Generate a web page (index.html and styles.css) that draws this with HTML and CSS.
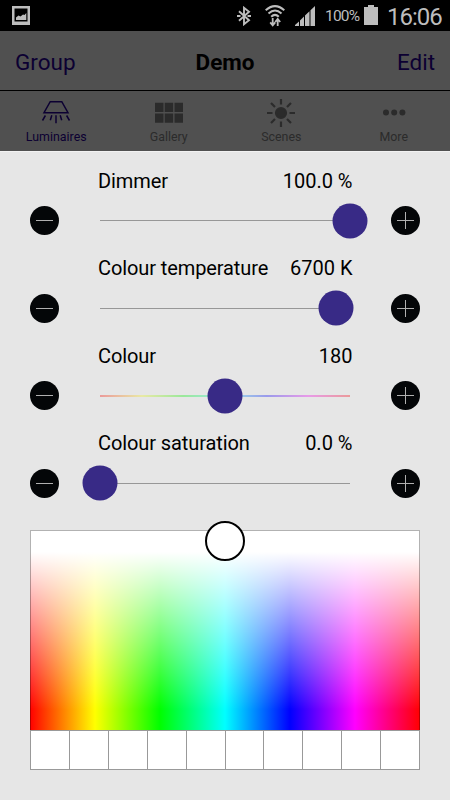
FILE: index.html
```
<!DOCTYPE html>
<html lang="en">
<head>
    <meta charset="UTF-8">
    <meta name="viewport" content="width=device-width, initial-scale=1.0">
    <title>Demo</title>
    <link rel="stylesheet" href="styles.css">
</head>
<body>
    <div class="status-bar">
        <svg class="picture-icon" width="18" height="19" viewBox="0 0 18 19">
            <path d="M0 0h18v19H0z" fill="#bdbdbd"/>
            <path d="M2.500 2.500h13v13h-13z" fill="#000"/>
            <path d="M4 14v-2.500l2.500-2 2 1 2.500-2 1.500.5 1.800-2V14z" fill="#bdbdbd"/>
        </svg>
        <div class="status-icons">
            <svg width="14" height="20" viewBox="0 0 14 20" fill="none" stroke="#bdbdbd" stroke-width="1.900">
                <path d="M2 5.300l10 8.900-5 4V1.800l5 4-10 8.900"/>
                <path d="M0 10h3.500M10.500 10H14"/>
            </svg>
            <svg class="wifi-icon" width="20" height="22" viewBox="0 0 20 22" fill="none" stroke="#bdbdbd" stroke-width="2">
                <path d="M.7 5.200Q10-3 19.300 5.200M3.500 8.500Q10 2.500 16.500 8.500M6.200 11.700Q10 8 13.800 11.700"/>
                <path d="M7.700 13v7M5.200 17.300l2.500 3 2.500-3M12.700 21v-7M10.200 17l2.500-3 2.500 3" stroke-width="1.800"/>
            </svg>
            <svg class="signal-icon" width="20" height="20" viewBox="0 0 20 20" fill="#bdbdbd">
                <path d="M0 20v-1l4-3.500V20zM5 20v-5.500l4-4V20zM10 20V9.500l4.500-4.200V20zM15.500 20V4.300L20 0v20z"/>
            </svg>
        </div>
        <span class="battery-level">100%</span>
        <svg class="battery-icon" width="14" height="20" viewBox="0 0 14 20" fill="#bdbdbd">
            <path d="M0 2h4V0h6v2h4v18H0z"/>
        </svg>
        <span class="clock">16:06</span>
    </div>

    <div class="nav-bar">
        <span class="nav-link">Group</span>
        <h1>Demo</h1>
        <span class="nav-link right">Edit</span>
    </div>

    <div class="tabs">
        <div class="tab active">
            <svg width="30" height="28" viewBox="0 0 30 28" fill="none" stroke="currentColor" stroke-width="1.500">
                <path d="M9.200 3.700h11.600l6.200 11H3z"/>
                <path d="M4.400 17.500l-2.900 5M10.800 17.300l-1.500 5M15 17.300v8M19.200 17.300l1.500 5M25.600 17.500l2.900 5"/>
            </svg>
            <span>Luminaires</span>
        </div>
        <div class="tab">
            <svg width="30" height="28" viewBox="0 0 30 28" fill="currentColor">
                <path d="M1 4.700h8.500V14H1zM10.700 4.700h8.500V14h-8.500zM20.500 4.700H29V14h-8.500zM1 15.500h8.500v9.200H1zM10.700 15.500h8.500v9.200h-8.500zM20.500 15.500H29v9.200h-8.500z"/>
            </svg>
            <span>Gallery</span>
        </div>
        <div class="tab">
            <svg width="30" height="28" viewBox="0 0 30 28" fill="currentColor" stroke="currentColor" stroke-width="2.200">
                <circle cx="15" cy="15" r="5"/>
                <path d="M15 1v5.500M15 23.500V29M1 15h5.500M23.500 15H29M5 5l4 4M21 21l4 4M5 25l4-4M21 9l4-4"/>
            </svg>
            <span>Scenes</span>
        </div>
        <div class="tab">
            <svg width="30" height="28" viewBox="0 0 30 28" fill="currentColor">
                <circle cx="7" cy="14.600" r="3"/>
                <circle cx="15.200" cy="14.600" r="3"/>
                <circle cx="23.400" cy="14.600" r="3"/>
            </svg>
            <span>More</span>
        </div>
    </div>

    <div class="panel">
        <div class="control">
            <div class="labels"><span class="name">Dimmer</span><span>100.0 %</span></div>
            <div class="slider-row">
                <button class="step minus" aria-label="Decrease"></button>
                <div class="slider"><div class="thumb" style="left: 100%"></div></div>
                <button class="step plus" aria-label="Increase"></button>
            </div>
        </div>
        <div class="control">
            <div class="labels"><span class="name">Colour temperature</span><span>6700 K</span></div>
            <div class="slider-row">
                <button class="step minus" aria-label="Decrease"></button>
                <div class="slider"><div class="thumb" style="left: 94.200%"></div></div>
                <button class="step plus" aria-label="Increase"></button>
            </div>
        </div>
        <div class="control">
            <div class="labels"><span class="name">Colour</span><span>180</span></div>
            <div class="slider-row">
                <button class="step minus" aria-label="Decrease"></button>
                <div class="slider hue"><div class="thumb" style="left: 50%"></div></div>
                <button class="step plus" aria-label="Increase"></button>
            </div>
        </div>
        <div class="control">
            <div class="labels"><span class="name">Colour saturation</span><span>0.0 %</span></div>
            <div class="slider-row">
                <button class="step minus" aria-label="Decrease"></button>
                <div class="slider"><div class="thumb" style="left: 0%"></div></div>
                <button class="step plus" aria-label="Increase"></button>
            </div>
        </div>

        <div class="palette">
            <div class="picker" style="left: 50%; top: 5%"></div>
        </div>
        <div class="swatches">
            <div></div><div></div><div></div><div></div><div></div>
            <div></div><div></div><div></div><div></div><div></div>
        </div>
    </div>
</body>
</html>
```

FILE: styles.css
```
* {
    margin: 0;
    padding: 0;
    box-sizing: border-box;
}

body {
    font-family: Roboto, sans-serif;
    width: 450px;
    height: 800px;
    background: #505050;
    color: #000;
    overflow: hidden;
}

svg {
    display: block;
    flex: none;
}

/* Status bar */
.status-bar {
    display: flex;
    align-items: center;
    height: 31px;
    padding: 0 8px 0 12px;
    background: #000;
    color: #bdbdbd;
}

.status-icons {
    display: flex;
    align-items: center;
    width: 79px;
    margin-left: auto;
}

.wifi-icon {
    margin-left: 14px;
}

.signal-icon {
    margin-left: 10px;
}

.battery-level {
    width: 35px;
    margin-left: 9px;
    padding-top: 2px;
    font-size: 15.5px;
    line-height: 29px;
    letter-spacing: -0.8px;
    white-space: nowrap;
}

.battery-icon {
    margin-left: 4px;
    margin-bottom: 2px;
}

.clock {
    width: 55px;
    margin-left: 9px;
    padding-top: 2px;
    font-size: 24px;
    line-height: 30px;
    letter-spacing: -1px;
    white-space: nowrap;
}

/* Navigation */
.nav-bar {
    display: grid;
    grid-template-columns: 1fr auto 1fr;
    align-items: center;
    height: 60px;
    padding: 2px 15px 0;
    border-bottom: 1px solid #000;
    font-size: 22.5px;
}

.nav-bar h1 {
    font-size: 22.5px;
    font-weight: bold;
}

.nav-link {
    color: #0c0032;
}

.nav-link.right {
    text-align: right;
}

.tabs {
    display: grid;
    grid-template-columns: repeat(4, 1fr);
    height: 60px;
    padding-top: 7px;
}

.tab {
    display: flex;
    flex-direction: column;
    align-items: center;
    color: #2b2b2b;
    font-size: 12.4px;
    line-height: 15px;
}

.tab svg {
    overflow: visible;
}

.tab span {
    margin-top: 3px;
}

.tab.active {
    color: #0c0032;
}

/* Controls */
.panel {
    height: 649px;
    padding: 12.8px 30px 0;
    border-top: 1px solid #f2f2f2;
    background: #e6e6e6;
}

.control {
    height: 87.5px;
}

.labels {
    display: flex;
    justify-content: space-between;
    height: 32px;
    padding: 0 67.5px 0 68px;
    font-size: 20px;
    line-height: 32px;
}

.name {
    letter-spacing: -0.1px;
}

.slider-row {
    display: flex;
    align-items: center;
    justify-content: space-between;
    height: 48px;
}

.step {
    width: 29px;
    height: 29px;
    border: none;
    border-radius: 50%;
    background: #040608;
}

.step.minus {
    margin: 0 0.6px 0 0.4px;
    background: linear-gradient(#b0b0b0, #b0b0b0) center / 17px 1px no-repeat #040608;
}

.step.plus {
    margin: 0 0.4px 0 0.6px;
    background:
        linear-gradient(#b0b0b0, #b0b0b0) center / 17px 1px no-repeat,
        linear-gradient(#b0b0b0, #b0b0b0) center / 1px 17px no-repeat #040608;
}

.slider {
    position: relative;
    width: 250px;
    height: 1px;
    background: #979797;
}

.slider.hue {
    height: 2px;
    background: linear-gradient(to right, #eb9a9a, #e9e9a5, #9ae89a, #9ae8e8, #9a9aeb, #e89ae8, #eb9a9a);
}

.thumb {
    position: absolute;
    top: 50%;
    width: 35px;
    height: 35px;
    border-radius: 50%;
    background: #382a86;
    transform: translate(-50%, -50%);
}

/* Colour picker */
.palette {
    position: relative;
    height: 200px;
    margin-top: 15.2px;
    border: 1px solid rgba(0, 0, 0, 0.3);
    border-bottom: none;
    background:
        linear-gradient(to bottom, #fff 11%, rgba(255, 255, 255, 0) 90%) border-box,
        linear-gradient(to right, #f00, #ff0, #0f0, #0ff, #00f, #f0f, #f00) border-box;
}

.picker {
    position: absolute;
    width: 40px;
    height: 40px;
    border: 2px solid #000;
    border-radius: 50%;
    background: #fff;
    transform: translate(-50%, -50%);
}

.swatches {
    display: grid;
    grid-template-columns: repeat(10, 1fr);
    height: 40px;
    border: 1px solid #999;
    border-right: none;
    background: #fff;
}

.swatches div {
    border-right: 1px solid #999;
}
```
